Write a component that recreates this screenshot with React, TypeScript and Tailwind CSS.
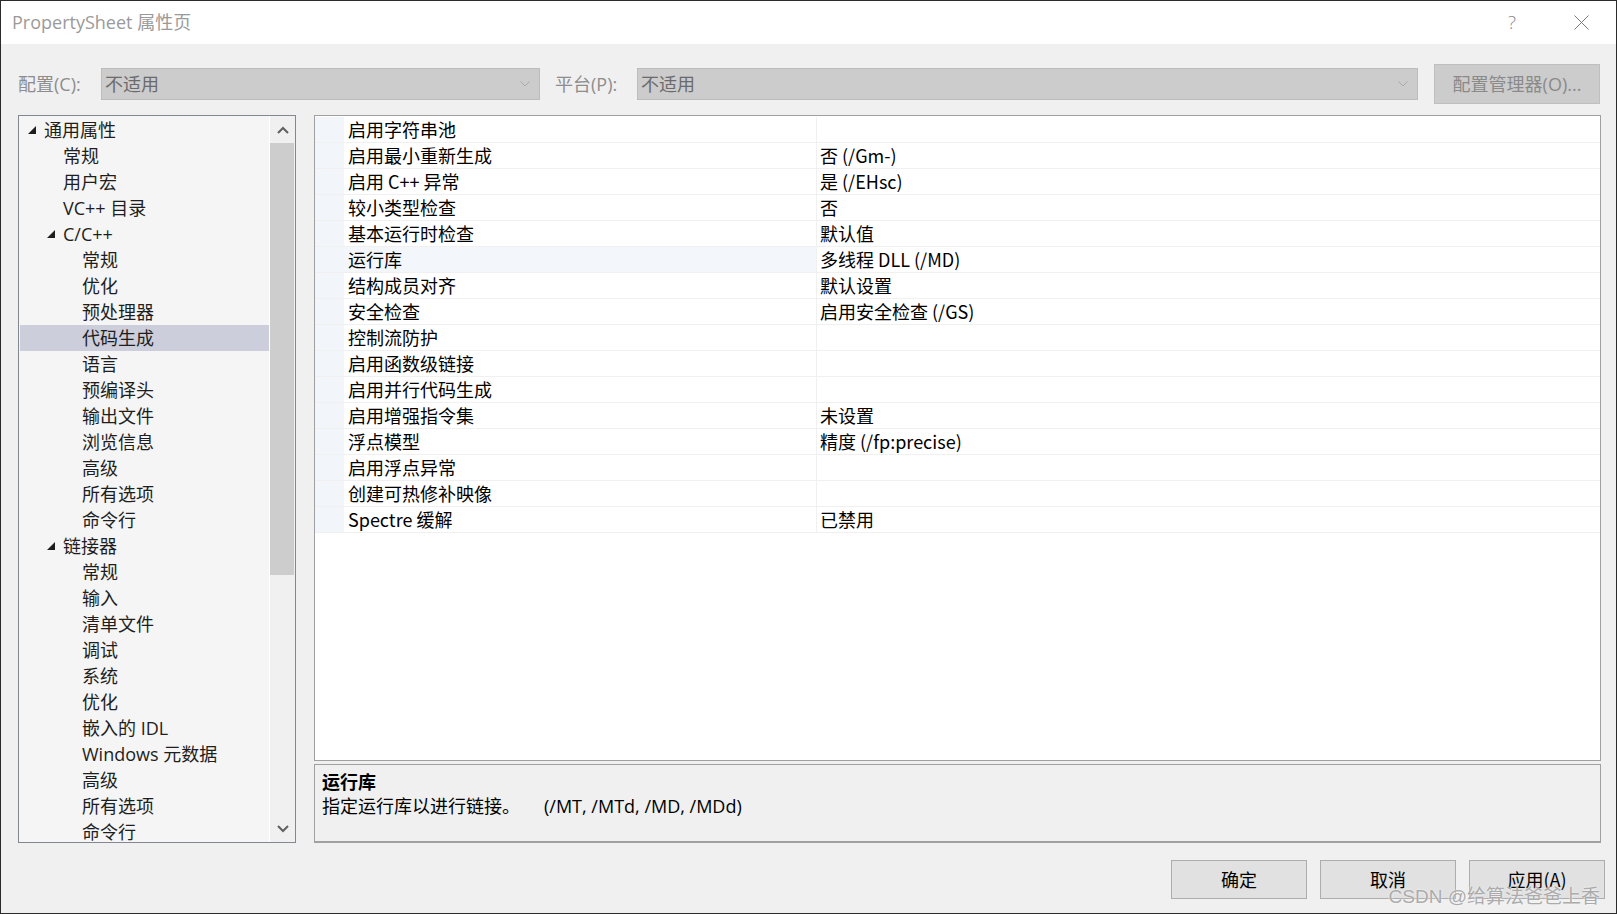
import React from "react";

type TreeItem = { label: string; level: number; expanded?: boolean; selected?: boolean };

const treeItems: TreeItem[] = [
  { label: "通用属性", level: 0, expanded: true },
  { label: "常规", level: 1 },
  { label: "用户宏", level: 1 },
  { label: "VC++ 目录", level: 1 },
  { label: "C/C++", level: 1, expanded: true },
  { label: "常规", level: 2 },
  { label: "优化", level: 2 },
  { label: "预处理器", level: 2 },
  { label: "代码生成", level: 2, selected: true },
  { label: "语言", level: 2 },
  { label: "预编译头", level: 2 },
  { label: "输出文件", level: 2 },
  { label: "浏览信息", level: 2 },
  { label: "高级", level: 2 },
  { label: "所有选项", level: 2 },
  { label: "命令行", level: 2 },
  { label: "链接器", level: 1, expanded: true },
  { label: "常规", level: 2 },
  { label: "输入", level: 2 },
  { label: "清单文件", level: 2 },
  { label: "调试", level: 2 },
  { label: "系统", level: 2 },
  { label: "优化", level: 2 },
  { label: "嵌入的 IDL", level: 2 },
  { label: "Windows 元数据", level: 2 },
  { label: "高级", level: 2 },
  { label: "所有选项", level: 2 },
  { label: "命令行", level: 2 },
];

const properties: [string, string][] = [
  ["启用字符串池", ""],
  ["启用最小重新生成", "否 (/Gm-)"],
  ["启用 C++ 异常", "是 (/EHsc)"],
  ["较小类型检查", "否"],
  ["基本运行时检查", "默认值"],
  ["运行库", "多线程 DLL (/MD)"],
  ["结构成员对齐", "默认设置"],
  ["安全检查", "启用安全检查 (/GS)"],
  ["控制流防护", ""],
  ["启用函数级链接", ""],
  ["启用并行代码生成", ""],
  ["启用增强指令集", "未设置"],
  ["浮点模型", "精度 (/fp:precise)"],
  ["启用浮点异常", ""],
  ["创建可热修补映像", ""],
  ["Spectre 缓解", "已禁用"],
];

const indent: Record<number, string> = {
  0: "pl-[8px]",
  1: "pl-[27px]",
  2: "pl-[46px]",
};

function Chevron({ up }: { up?: boolean }) {
  return (
    <svg width="12" height="8" viewBox="0 0 12 8">
      <path
        d={up ? "M1 7 L6 2 L11 7" : "M1 1 L6 6 L11 1"}
        fill="none"
        stroke="#606060"
        strokeWidth="2"
      />
    </svg>
  );
}

function ComboArrow() {
  return (
    <svg width="10" height="6" viewBox="0 0 10 6">
      <path d="M0.5 0.5 L5 5 L9.5 0.5" fill="none" stroke="#a8a8a8" strokeWidth="1" />
    </svg>
  );
}

function Combo({ width }: { width: string }) {
  return (
    <div
      className={`${width} flex h-[32px] items-center justify-between border border-[#bcbcbc] bg-[#cccccc] pl-[3px] pr-[9px] text-[18px] text-[#6b6b6b]`}
    >
      <span>不适用</span>
      <ComboArrow />
    </div>
  );
}

function TreeRow({ item }: { item: TreeItem }) {
  return (
    <div
      className={`flex h-[26px] items-center ${indent[item.level]} ${item.selected ? "bg-[#cccedb]" : ""}`}
    >
      <span className="flex w-[16px] shrink-0 items-center">
        {item.expanded && (
          <svg width="8" height="8" viewBox="0 0 8 8">
            <polygon points="8,0 8,8 0,8" fill="#1e1e1e" />
          </svg>
        )}
      </span>
      <span className="whitespace-nowrap leading-[26px]">{item.label}</span>
    </div>
  );
}

function DialogButton({ label }: { label: string }) {
  return (
    <button className="flex h-[39px] w-[136px] items-center justify-center border border-[#adadad] bg-[#e1e1e1] text-[18px] text-black">
      {label}
    </button>
  );
}

export default function App() {
  return (
    <div className="relative flex h-[914px] w-[1617px] flex-col overflow-hidden border border-[#2b2b2b] bg-[#f0f0f0] font-['Open_Sans','Noto_Sans_CJK_SC',sans-serif] text-[#1e1e1e]">
      {/* title bar */}
      <div className="flex h-[43px] items-center justify-between bg-white pl-[11px]">
        <span className="text-[18px] text-[#9a9a9a]">PropertySheet 属性页</span>
        <div className="flex items-center gap-[58px] pr-[27px]">
          <span className="text-[19px] font-light text-[#8a8a8a]">?</span>
          <svg width="15" height="15" viewBox="0 0 15 15">
            <path d="M0.5 0.5 L14.5 14.5 M14.5 0.5 L0.5 14.5" stroke="#7a7a7a" strokeWidth="1" />
          </svg>
        </div>
      </div>

      {/* configuration row */}
      <div className="mt-[20px] flex h-[40px] items-center pl-[17px] text-[18px]">
        <span className="w-[83px] text-[#8d8d8d]">配置(C):</span>
        <Combo width="w-[439px]" />
        <span className="ml-[15px] w-[82px] text-[#8d8d8d]">平台(P):</span>
        <Combo width="w-[781px]" />
        <div className="ml-[16px] flex h-[40px] w-[166px] items-center justify-center border border-[#bfbfbf] bg-[#cccccc] text-[#8a8a8a]">
          配置管理器(O)...
        </div>
      </div>

      {/* main area */}
      <div className="mt-[11px] flex h-[728px] gap-[18px] pl-[17px]">
        {/* tree */}
        <div className="flex w-[278px] border border-[#828790] bg-[#f5f5f5] text-[18px] text-[#1e1e1e]">
          <div className="flex-1 overflow-hidden pl-[1px] pt-[1px]">
            {treeItems.map((item, i) => (
              <TreeRow key={i} item={item} />
            ))}
          </div>
          <div className="flex w-[26px] flex-col border-l border-white bg-[#f0f0f0]">
            <div className="flex h-[27px] items-center justify-center">
              <Chevron up />
            </div>
            <div className="mr-[1px] h-[432px] bg-[#cdcdcd]" />
            <div className="flex-1" />
            <div className="flex h-[27px] items-center justify-center">
              <Chevron />
            </div>
          </div>
        </div>

        {/* property grid + description */}
        <div className="flex w-[1287px] flex-col gap-[3px]">
          <div className="h-[646px] border border-[#a0a0a0] bg-white pt-[1px] font-['Noto_Sans_CJK_SC',sans-serif] text-[18px] text-black">
            {properties.map(([name, value], i) => (
              <div key={i} className="flex h-[26px] border-b border-[#f0f0f0]">
                <div className="w-[29px] shrink-0 bg-[#f2f5fa]" />
                <div
                  className={`flex w-[472px] shrink-0 items-center pl-[4px] ${name === "运行库" ? "bg-[#f3f6fb]" : ""}`}
                >
                  {name}
                </div>
                <div className="flex flex-1 items-center border-l border-[#f0f0f0] pl-[3px]">
                  {value}
                </div>
              </div>
            ))}
          </div>
          <div className="flex-1 border border-b-2 border-[#a0a0a0] bg-[#f0f0f0] pl-[7px] pt-[4px] font-['Noto_Sans_CJK_SC',sans-serif] text-[18px] leading-[24px] text-black">
            <div className="font-bold">运行库</div>
            <div>
              指定运行库以进行链接。
              <span className="ml-[24px] font-['Open_Sans',sans-serif]">(/MT, /MTd, /MD, /MDd)</span>
            </div>
          </div>
        </div>
      </div>

      {/* dialog buttons */}
      <div className="mt-[17px] flex justify-end gap-[13px] pr-[11px] font-['Noto_Sans_CJK_SC',sans-serif]">
        <DialogButton label="确定" />
        <DialogButton label="取消" />
        <DialogButton label="应用(A)" />
      </div>

      {/* watermark */}
      <span className="absolute bottom-[5px] right-[16px] font-['Liberation_Sans','Noto_Sans_CJK_SC',sans-serif] text-[19px] leading-[22px] text-[#ababab] [text-shadow:0_0_2px_#ffffff]">
        CSDN @给算法爸爸上香
      </span>
    </div>
  );
}
